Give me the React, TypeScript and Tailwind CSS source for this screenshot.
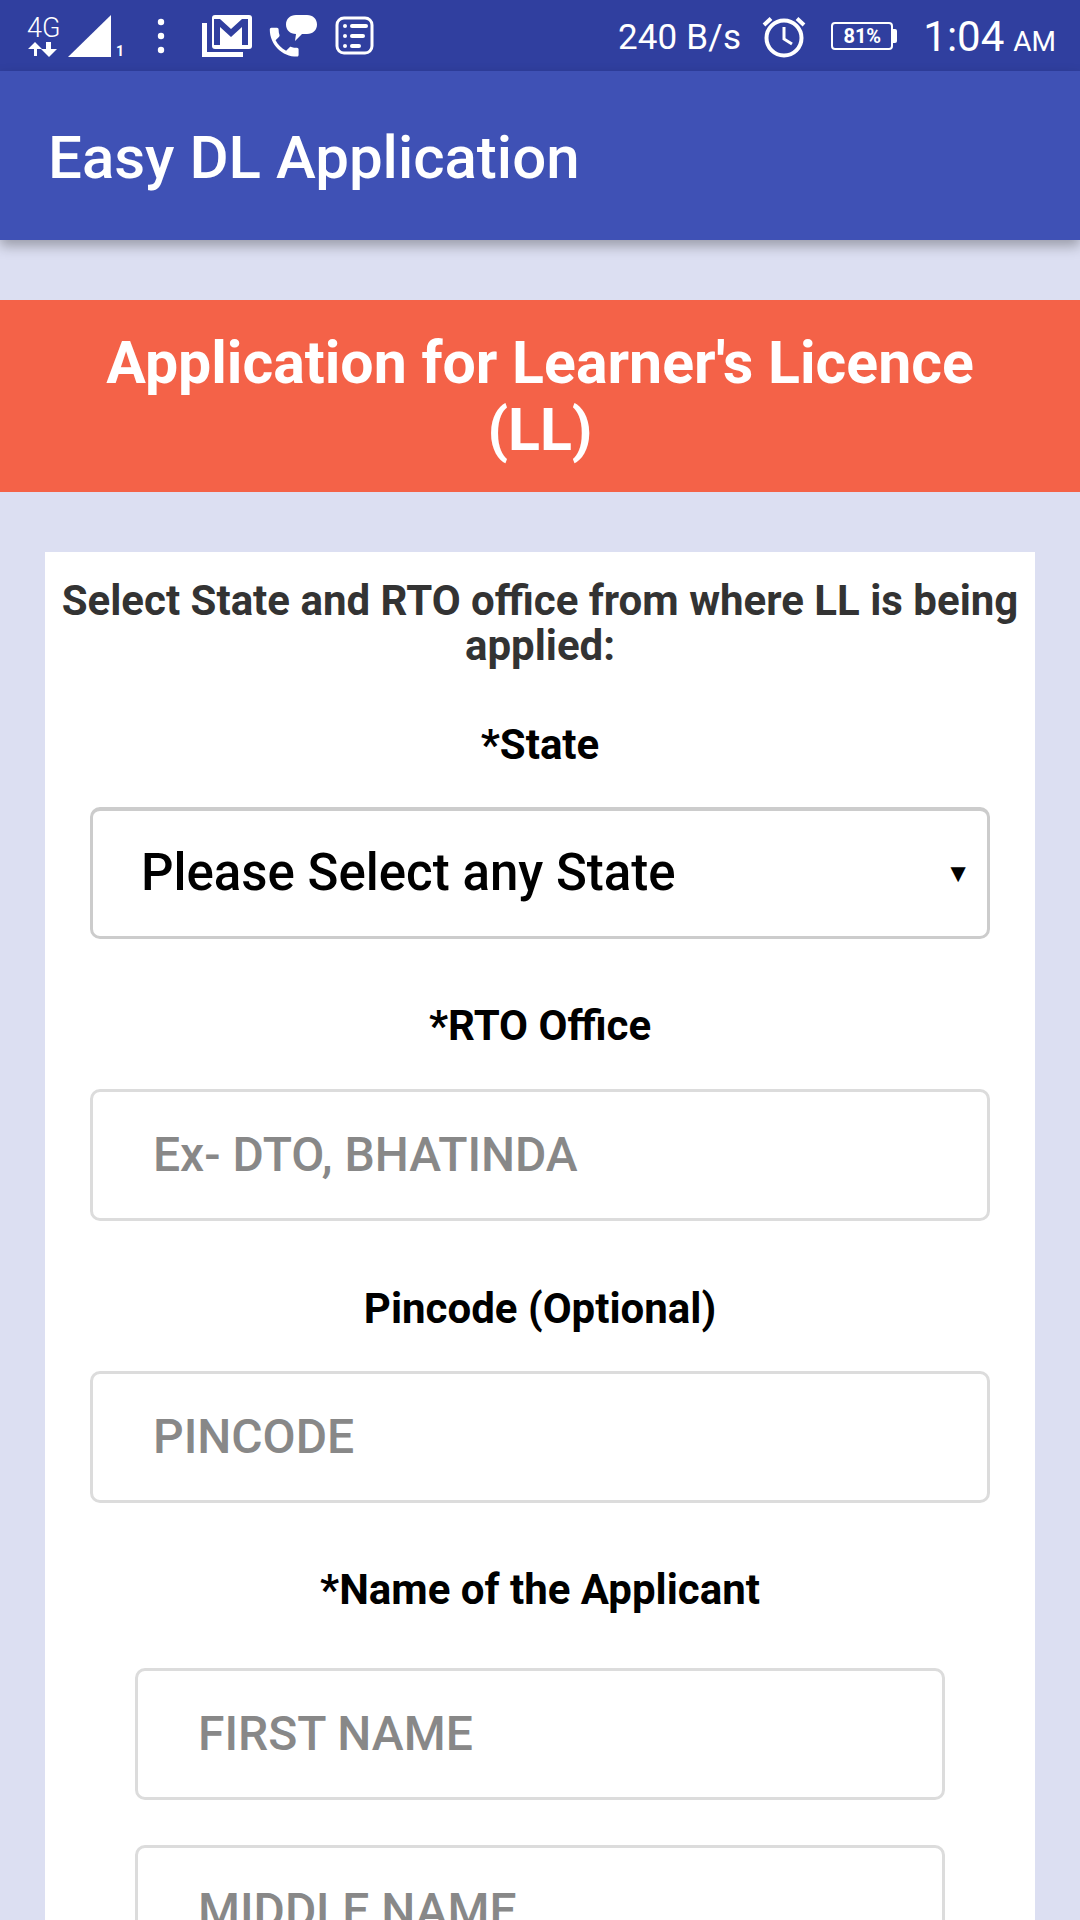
import React from "react";

function Field({ placeholder, wide = true, className = "" }: { placeholder: string; wide?: boolean; className?: string }) {
  return (
    <div className={`h-[132px] rounded-[10px] border-[3px] border-[#dcdcdc] bg-white flex items-center text-[48px] font-medium text-[#888888] ${wide ? "mx-[45px] pl-[60px]" : "mx-[90px] pl-[60px]"} ${className}`}>
      {placeholder}
    </div>
  );
}

function Label({ children, className = "" }: { children: React.ReactNode; className?: string }) {
  return <div className={`text-center text-[42px] leading-[50px] font-bold text-black ${className}`}>{children}</div>;
}

function StatusLeft() {
  return (
    <svg width="400" height="71" viewBox="0 0 400 71" fill="white" className="shrink-0">
      <text x="27" y="37" fontFamily="Roboto" fontSize="27" fontWeight="300">4G</text>
      <path d="M34 55V48H28L35 41 42 48H37V55ZM46 41H51V48H57L49 56 41 48H46Z" transform="translate(0 1)" />
      <path d="M68 57 111 15V57Z" />
      <text x="116" y="56" fontFamily="Roboto" fontSize="14" fontWeight="700">1</text>
      <circle cx="161" cy="22" r="3.2" />
      <circle cx="161" cy="36" r="3.2" />
      <circle cx="161" cy="50" r="3.2" />
      <path d="M202 23H207V52H243V57H202Z" />
      <rect x="212" y="15" width="40" height="34" rx="3" fill="white" />
      <path d="M214 19H220L231 29 242 19H248V45H242V27L231 37 220 27V45H214Z" fill="#303f9f" />
      <path transform="translate(265 23) scale(1.6)" d="M6.62 10.79c1.44 2.83 3.76 5.14 6.59 6.59l2.2-2.2c.27-.27.67-.36 1.02-.24 1.12.37 2.33.57 3.57.57.55 0 1 .45 1 1V20c0 .55-.45 1-1 1-9.39 0-17-7.61-17-17 0-.55.45-1 1-1h3.5c.55 0 1 .45 1 1 0 1.25.2 2.45.57 3.57.11.35.03.74-.25 1.02l-2.2 2.2z" />
      <path d="M296 15H307C313 15 317 19 317 24.500 317 30 313 34 307 34H302L295 41 296 34C290 34 286 30 286 24.500 286 19 290 15 296 15Z" />
      <rect x="337" y="18" width="35" height="35" rx="7" fill="none" stroke="white" strokeWidth="3" />
      <circle cx="345" cy="26" r="2" />
      <circle cx="345" cy="36" r="2" />
      <circle cx="345" cy="46" r="2" />
      <rect x="350" y="24" width="18" height="4" rx="2" />
      <rect x="350" y="34" width="15" height="4" rx="2" />
      <rect x="350" y="44" width="11" height="4" rx="2" />
    </svg>
  );
}

function StatusRight() {
  return (
    <div className="flex items-center text-white font-['Roboto',sans-serif] shrink-0">
      <span className="text-[35px] leading-none tracking-[0.2px] mr-[21px] mt-[4px]">240 B/s</span>
      <svg width="44" height="44" viewBox="0 0 44 44" fill="none" stroke="white" className="mr-[25px] mt-[1px]">
        <circle cx="22" cy="24" r="17.5" strokeWidth="4" />
        <path d="M22 13V25L30 30" strokeWidth="3" />
        <path d="M2 11 9 4.5M42 11 35 4.5" strokeWidth="4" />
      </svg>
      <div className="flex items-center mr-[26px] mt-[1px]">
        <div className="w-[62px] h-[28px] rounded-[4px] border-[2.5px] border-white flex items-center justify-center text-[20px] font-bold leading-none">81%</div>
        <div className="w-[4px] h-[14px] bg-white rounded-r-[2px]"></div>
      </div>
      <span className="text-[42px] leading-none mr-[9px] mt-[3px]">1:04</span>
      <span className="text-[28px] leading-none mr-[24px] mt-[12px]">AM</span>
    </div>
  );
}

export default function App() {
  return (
    <div className="w-[1080px] h-[1920px] overflow-hidden bg-[#dcdff2] font-['Roboto',sans-serif]">
      <div className="h-[71px] bg-[#303f9f] flex items-center justify-between">
        <StatusLeft />
        <StatusRight />
      </div>
      <div className="relative h-[169px] bg-[#3f51b5] flex items-center pl-[48px] pt-[4px] text-[60px] font-medium text-white shadow-[0_6px_12px_rgba(0,0,0,0.3)]">
        Easy DL Application
      </div>
      <div className="mt-[60px] h-[192px] bg-[#f46248] flex items-center justify-center px-[60px] text-center text-[59px] leading-[67px] font-bold text-white">
        <div>Application for Learner's Licence<br />(LL)</div>
      </div>
      <div className="mt-[60px] mx-[45px] bg-white pt-[26px] h-[1400px]">
        <div className="text-center text-[42px] leading-[45px] font-bold text-[#333333]">
          Select State and RTO office from where LL is being<br />applied:
        </div>
        <Label className="mt-[52px]">*State</Label>
        <div className="mx-[45px] mt-[37px] h-[132px] rounded-[10px] border-[3px] border-[#cccccc] border-t-[4px] bg-white flex items-center justify-between pl-[48px] pr-[16px] text-[51px] font-medium text-black">
          <span>Please Select any State</span>
          <span className="text-[26px]">▼</span>
        </div>
        <Label className="mt-[62px]">*RTO Office</Label>
        <Field placeholder="Ex- DTO, BHATINDA" className="mt-[38px]" />
        <Label className="mt-[63px]">Pincode (Optional)</Label>
        <Field placeholder="PINCODE" className="mt-[37px]" />
        <Label className="mt-[62px]">*Name of the Applicant</Label>
        <Field placeholder="FIRST NAME" wide={false} className="mt-[53px]" />
        <Field placeholder="MIDDLE NAME" wide={false} className="mt-[45px]" />
      </div>
    </div>
  );
}
